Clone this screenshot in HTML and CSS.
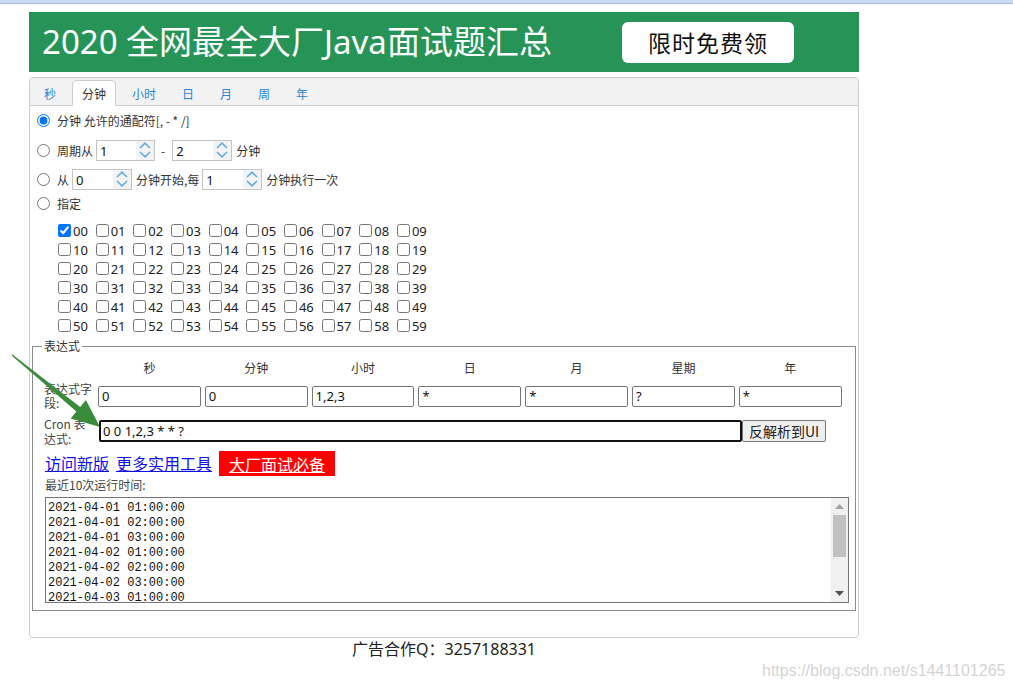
FILE: index.html
```html
<!DOCTYPE html>
<html lang="zh-CN">
<head>
<meta charset="utf-8">
<title>Cron 表达式生成器</title>
<link rel="stylesheet" href="styles.css">
</head>
<body>
<div class="topbar"></div>
<div class="page">
  <div class="banner">
    <span class="banner-title">2020 全网最全大厂Java面试题汇总</span>
    <span class="banner-btn">限时免费领</span>
  </div>

  <div class="panel">
    <div class="tabs">
      <span class="tab">秒</span>
      <span class="tab active">分钟</span>
      <span class="tab">小时</span>
      <span class="tab">日</span>
      <span class="tab">月</span>
      <span class="tab">周</span>
      <span class="tab">年</span>
    </div>

    <div class="tab-body">
      <div class="opt opt1"><input class="radio" type="radio" name="m" checked><span>分钟 允许的通配符[, - * /]</span></div>
      <div class="opt opt2"><input class="radio" type="radio" name="m"><span>周期从</span>
        <span class="spin w59"><span class="spin-val">1</span><span class="spin-btns"><svg width="12" height="7" viewBox="0 0 12 7"><polyline points="1,6 6,1.2 11,6" fill="none" stroke="#62ade6" stroke-width="1.6"/></svg><svg width="12" height="7" viewBox="0 0 12 7"><polyline points="1,1 6,5.8 11,1" fill="none" stroke="#62ade6" stroke-width="1.6"/></svg></span></span>
        <span class="dash">-</span>
        <span class="spin w60"><span class="spin-val">2</span><span class="spin-btns"><svg width="12" height="7" viewBox="0 0 12 7"><polyline points="1,6 6,1.2 11,6" fill="none" stroke="#62ade6" stroke-width="1.6"/></svg><svg width="12" height="7" viewBox="0 0 12 7"><polyline points="1,1 6,5.8 11,1" fill="none" stroke="#62ade6" stroke-width="1.6"/></svg></span></span>
        <span class="after">分钟</span>
      </div>
      <div class="opt opt3"><input class="radio" type="radio" name="m"><span>从</span>
        <span class="spin w60"><span class="spin-val">0</span><span class="spin-btns"><svg width="12" height="7" viewBox="0 0 12 7"><polyline points="1,6 6,1.2 11,6" fill="none" stroke="#62ade6" stroke-width="1.6"/></svg><svg width="12" height="7" viewBox="0 0 12 7"><polyline points="1,1 6,5.8 11,1" fill="none" stroke="#62ade6" stroke-width="1.6"/></svg></span></span>
        <span class="after">分钟开始,每</span>
        <span class="spin w60"><span class="spin-val">1</span><span class="spin-btns"><svg width="12" height="7" viewBox="0 0 12 7"><polyline points="1,6 6,1.2 11,6" fill="none" stroke="#62ade6" stroke-width="1.6"/></svg><svg width="12" height="7" viewBox="0 0 12 7"><polyline points="1,1 6,5.8 11,1" fill="none" stroke="#62ade6" stroke-width="1.6"/></svg></span></span>
        <span class="after">分钟执行一次</span>
      </div>
      <div class="opt opt4"><input class="radio" type="radio" name="m"><span>指定</span></div>

      <div class="grid">
        <label class="cell"><input type="checkbox" checked>00</label>
        <label class="cell"><input type="checkbox">01</label>
        <label class="cell"><input type="checkbox">02</label>
        <label class="cell"><input type="checkbox">03</label>
        <label class="cell"><input type="checkbox">04</label>
        <label class="cell"><input type="checkbox">05</label>
        <label class="cell"><input type="checkbox">06</label>
        <label class="cell"><input type="checkbox">07</label>
        <label class="cell"><input type="checkbox">08</label>
        <label class="cell"><input type="checkbox">09</label>
        <label class="cell"><input type="checkbox">10</label>
        <label class="cell"><input type="checkbox">11</label>
        <label class="cell"><input type="checkbox">12</label>
        <label class="cell"><input type="checkbox">13</label>
        <label class="cell"><input type="checkbox">14</label>
        <label class="cell"><input type="checkbox">15</label>
        <label class="cell"><input type="checkbox">16</label>
        <label class="cell"><input type="checkbox">17</label>
        <label class="cell"><input type="checkbox">18</label>
        <label class="cell"><input type="checkbox">19</label>
        <label class="cell"><input type="checkbox">20</label>
        <label class="cell"><input type="checkbox">21</label>
        <label class="cell"><input type="checkbox">22</label>
        <label class="cell"><input type="checkbox">23</label>
        <label class="cell"><input type="checkbox">24</label>
        <label class="cell"><input type="checkbox">25</label>
        <label class="cell"><input type="checkbox">26</label>
        <label class="cell"><input type="checkbox">27</label>
        <label class="cell"><input type="checkbox">28</label>
        <label class="cell"><input type="checkbox">29</label>
        <label class="cell"><input type="checkbox">30</label>
        <label class="cell"><input type="checkbox">31</label>
        <label class="cell"><input type="checkbox">32</label>
        <label class="cell"><input type="checkbox">33</label>
        <label class="cell"><input type="checkbox">34</label>
        <label class="cell"><input type="checkbox">35</label>
        <label class="cell"><input type="checkbox">36</label>
        <label class="cell"><input type="checkbox">37</label>
        <label class="cell"><input type="checkbox">38</label>
        <label class="cell"><input type="checkbox">39</label>
        <label class="cell"><input type="checkbox">40</label>
        <label class="cell"><input type="checkbox">41</label>
        <label class="cell"><input type="checkbox">42</label>
        <label class="cell"><input type="checkbox">43</label>
        <label class="cell"><input type="checkbox">44</label>
        <label class="cell"><input type="checkbox">45</label>
        <label class="cell"><input type="checkbox">46</label>
        <label class="cell"><input type="checkbox">47</label>
        <label class="cell"><input type="checkbox">48</label>
        <label class="cell"><input type="checkbox">49</label>
        <label class="cell"><input type="checkbox">50</label>
        <label class="cell"><input type="checkbox">51</label>
        <label class="cell"><input type="checkbox">52</label>
        <label class="cell"><input type="checkbox">53</label>
        <label class="cell"><input type="checkbox">54</label>
        <label class="cell"><input type="checkbox">55</label>
        <label class="cell"><input type="checkbox">56</label>
        <label class="cell"><input type="checkbox">57</label>
        <label class="cell"><input type="checkbox">58</label>
        <label class="cell"><input type="checkbox">59</label>
      </div>
    </div>

    <fieldset class="expr">
      <legend>表达式</legend>
      <div class="expr-grid">
        <span></span>
        <span class="col-h">秒</span>
        <span class="col-h">分钟</span>
        <span class="col-h">小时</span>
        <span class="col-h">日</span>
        <span class="col-h">月</span>
        <span class="col-h">星期</span>
        <span class="col-h">年</span>

        <span class="row-label">表达式字段:</span>
        <input class="field" type="text" value="0">
        <input class="field" type="text" value="0">
        <input class="field" type="text" value="1,2,3">
        <input class="field" type="text" value="*">
        <input class="field" type="text" value="*">
        <input class="field" type="text" value="?">
        <input class="field" type="text" value="*">
      </div>
      <div class="cron-row">
        <span class="row-label cron-label">Cron 表达式:</span>
        <input class="cron-input" type="text" value="0 0 1,2,3 * * ?">
        <button class="parse-btn" type="button">反解析到UI</button>
      </div>
      <div class="links">
        <a href="#" class="link">访问新版</a>
        <a href="#" class="link">更多实用工具</a>
        <a href="#" class="link hot">大厂面试必备</a>
      </div>
      <div class="recent">最近10次运行时间:</div>
      <div class="runs-box">
        <textarea class="runs" readonly>2021-04-01 01:00:00
2021-04-01 02:00:00
2021-04-01 03:00:00
2021-04-02 01:00:00
2021-04-02 02:00:00
2021-04-02 03:00:00
2021-04-03 01:00:00
2021-04-03 02:00:00
2021-04-03 03:00:00
2021-04-04 01:00:00</textarea>
        <div class="vscroll">
          <span class="sb-btn"><svg width="9" height="5" viewBox="0 0 9 5"><polygon points="0,5 9,5 4.5,0" fill="#a3a3a3"/></svg></span>
          <span class="sb-track"><span class="sb-thumb"></span></span>
          <span class="sb-btn"><svg width="9" height="5" viewBox="0 0 9 5"><polygon points="0,0 9,0 4.5,5" fill="#505050"/></svg></span>
        </div>
      </div>
    </fieldset>
  </div>

  <div class="ad">广告合作Q：3257188331</div>
</div>

<svg class="arrow" width="110" height="440" viewBox="0 0 110 440">
  <polygon points="11.6,355.5 12.4,354.5 80.2,407 85.9,400 100,427 70.7,418.6 76.4,411.6" fill="#3a8b3c"/>
</svg>
<div class="watermark">https://blog.csdn.net/s1441101265</div>
</body>
</html>
```

FILE: styles.css
```css
html, body {
  margin: 0;
  padding: 0;
  background: #fff;
}
body {
  position: relative;
  width: 1013px;
  height: 689px;
  overflow: hidden;
  font-family: "Noto Sans", "Noto Sans CJK SC", sans-serif;
  font-size: 12px;
  color: #333;
}
.topbar {
  height: 3px;
  background: #c8d8f0;
  border-bottom: 1px solid #a9bedf;
}
.page {
  width: 830px;
  margin: 8px 0 0 29px;
}
.banner {
  height: 60px;
  background: #259456;
  display: flex;
  align-items: center;
  padding-left: 13px;
  box-sizing: border-box;
}
.banner-title {
  font-family: "Noto Sans", "Noto Sans CJK SC", sans-serif;
  color: #fff;
  font-size: 33px;
  line-height: 40px;
  width: 580px;
  white-space: nowrap;
}
.banner-btn {
  width: 172px;
  height: 41px;
  background: #fff;
  border-radius: 6px;
  color: #111;
  font-family: "Noto Sans CJK SC", sans-serif;
  font-size: 23px;
  line-height: 41px;
  text-align: center;
  letter-spacing: 1px;
  margin-top: 1px;
}
.panel {
  margin-top: 5px;
  border: 1px solid #cdcdcd;
  border-radius: 4px;
  height: 561px;
  box-sizing: border-box;
}
.tabs {
  height: 28px;
  padding: 2px 0 0 4px;
  box-sizing: border-box;
  background: #f2f2f2;
  border-bottom: 1px solid #cdcdcd;
  border-radius: 4px 4px 0 0;
  display: flex;
  align-items: flex-start;
  gap: 6px;
}
.tab {
  height: 25px;
  line-height: 25px;
  padding: 0 9px;
  border: 1px solid transparent;
  border-bottom: none;
  color: #2c86d2;
  font-family: "Noto Sans CJK SC", sans-serif;
  font-size: 12px;
  border-radius: 5px 5px 0 0;
}
.tab.active {
  background: #fff;
  border-color: #cdcdcd;
  color: #333;
  margin-bottom: -1px;
}
.tab-body {
  padding-left: 7px;
}
.opt {
  display: flex;
  align-items: center;
  font-family: "Noto Sans CJK SC", sans-serif;
  font-size: 12px;
}
.opt1 { height: 28px; }
.opt2 { height: 32px; }
.opt3 { height: 26px; }
.opt4 { height: 22px; }
.radio {
  width: 13px;
  height: 13px;
  margin: 0 7px 0 0;
}
.spin {
  display: inline-flex;
  height: 21px;
  border: 1px solid #c4c4c4;
  box-sizing: border-box;
  margin-left: 3px;
  background: #fff;
}
.w59 { width: 59px; }
.w60 { width: 60px; }
.spin-val {
  flex: 1;
  font-size: 13px;
  line-height: 21px;
  padding-left: 3px;
  color: #111;
  font-family: "Noto Sans", sans-serif;
}
.spin-btns {
  width: 18px;
  background: #f3f3f3;
  display: flex;
  flex-direction: column;
  align-items: center;
  justify-content: center;
  gap: 2px;
}
.dash {
  margin: 0 4px 0 6px;
}
.after {
  margin-left: 4px;
}
.grid {
  display: grid;
  grid-template-columns: repeat(10, 37.67px);
  grid-auto-rows: 19px;
  margin: 7px 0 0 21px;
}
.cell {
  display: flex;
  align-items: center;
  font-family: "Noto Sans", sans-serif;
  font-size: 13px;
  color: #222;
  white-space: nowrap;
}
.cell input {
  width: 13px;
  height: 13px;
  margin: 0 2px 0 0;
}
.expr {
  margin: 2px 2px 0 2px;
  padding: 4px 6px 7px 12px;
  border: 1px solid #8a8a8a;
  min-width: 0;
}
.expr legend {
  padding: 0 2px;
  margin-left: -3px;
  font-family: "Noto Sans CJK SC", sans-serif;
  font-size: 12px;
  line-height: 18px;
}
.expr-grid {
  display: grid;
  grid-template-columns: 50px repeat(7, 102.8px);
  column-gap: 4px;
  grid-template-rows: 18px 28px;
  row-gap: 5px;
  align-items: center;
  margin-left: -1px;
}
.col-h {
  text-align: center;
  font-family: "Noto Sans CJK SC", sans-serif;
  font-size: 12px;
  line-height: 18px;
}
.row-label {
  font-family: "Noto Sans CJK SC", sans-serif;
  font-size: 12px;
  line-height: 14px;
  color: #444;
}
.field {
  height: 21px;
  box-sizing: border-box;
  border: 1px solid #767676;
  border-radius: 2px;
  padding: 0 3px;
  font-family: "Noto Sans", sans-serif;
  font-size: 13px;
  color: #111;
  width: 100%;
  margin: 0;
}
.cron-row {
  display: flex;
  align-items: center;
  height: 30px;
  margin: 6px 0 0 -1px;
}
.cron-label {
  width: 46px;
  margin-right: 9px;
  line-height: 15px;
  flex: none;
}
.cron-input {
  width: 643px;
  height: 22px;
  box-sizing: border-box;
  border: 2px solid #111;
  border-radius: 2px;
  padding: 0 2px;
  margin: 0;
  font-family: "Noto Sans", sans-serif;
  font-size: 13px;
  color: #111;
  outline: none;
}
.parse-btn {
  height: 22px;
  margin: -1px 0 0 0;
  padding: 0 6px;
  border: 1px solid #767676;
  border-radius: 2px;
  background: #efefef;
  font-family: "Noto Sans CJK SC", sans-serif;
  font-size: 14px;
  line-height: 18px;
  color: #222;
}
.links {
  display: flex;
  align-items: center;
  height: 26px;
  margin-top: 4px;
  gap: 7px;
}
.link {
  font-family: "Noto Sans CJK SC", sans-serif;
  font-size: 16px;
  line-height: 22px;
  color: #1010e0;
  text-decoration: underline;
}
.hot {
  background: #ff0000;
  color: #fff;
  padding: 2px 10px 1px 10px;
}
.recent {
  font-family: "Noto Sans CJK SC", sans-serif;
  font-size: 12px;
  line-height: 16px;
  color: #444;
  margin-top: 1px;
}
.runs-box {
  display: flex;
  width: 804px;
  height: 106px;
  box-sizing: border-box;
  margin-top: 4px;
  border: 1px solid #767676;
}
.runs {
  flex: 1;
  border: none;
  margin: 0;
  padding: 3px 2px 0 2px;
  font-family: "Liberation Mono", monospace;
  font-size: 12px;
  line-height: 15px;
  color: #111;
  resize: none;
  overflow: hidden;
  outline: none;
}
.vscroll {
  width: 17px;
  background: #f0f0f0;
  display: flex;
  flex-direction: column;
}
.sb-btn {
  height: 17px;
  display: flex;
  align-items: center;
  justify-content: center;
}
.sb-track {
  flex: 1;
  padding: 0 2px;
}
.sb-thumb {
  display: block;
  height: 42px;
  background: #c1c1c1;
}
.ad {
  text-align: center;
  font-family: "Noto Sans", "Noto Sans CJK SC", sans-serif;
  font-size: 16px;
  line-height: 22px;
  color: #222;
}
.arrow {
  position: absolute;
  left: 0;
  top: 0;
  pointer-events: none;
}
.watermark {
  position: absolute;
  left: 762px;
  top: 661px;
  font-family: "Liberation Sans", Arial, sans-serif;
  font-size: 16px;
  line-height: 20px;
  color: #d4d4d4;
  white-space: nowrap;
}
```
